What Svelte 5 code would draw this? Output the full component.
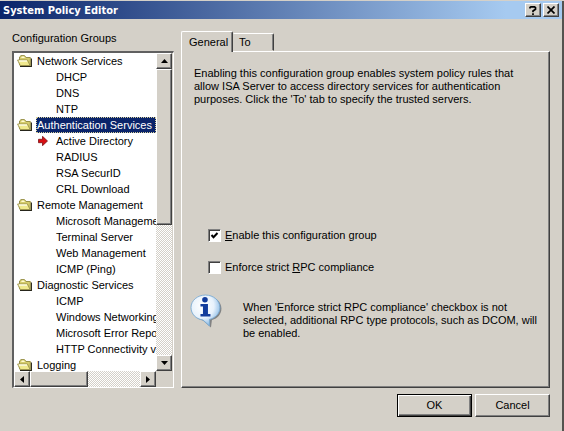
<script>
  const groups = [
    { name: 'Network Services', items: ['DHCP', 'DNS', 'NTP'] },
    { name: 'Authentication Services', items: ['Active Directory', 'RADIUS', 'RSA SecurID', 'CRL Download'] },
    { name: 'Remote Management', items: ['Microsoft Management', 'Terminal Server', 'Web Management', 'ICMP (Ping)'] },
    { name: 'Diagnostic Services', items: ['ICMP', 'Windows Networking', 'Microsoft Error Reporting', 'HTTP Connectivity verifiers'] },
    { name: 'Logging', items: [] }
  ];
  const current = 'Active Directory';
  let selected = $state('Authentication Services');
  let tab = $state('General');
  let enabled = $state(true);
  let strict = $state(false);
</script>

{#snippet folder()}
  <svg class="folder" width="15" height="12" viewBox="0 0 15 12" aria-hidden="true">
    <path d="M3 11.500h11.300V3.500" fill="none" stroke="#26251a" stroke-width="1.300" />
    <path d="M2.500 10V2L4 .6h3.500L9 2.500h4.300V10.500H4z" fill="#d6cd6c" stroke="#98904a" />
    <path d="M4 3l1-1.500h2l1 1.500z" fill="#fffbd0" />
    <path d="M.6 5h9.900l2.500 5.500H3.200z" fill="#f0e98e" stroke="#98904a" stroke-width=".9" />
    <path d="M1.800 6h8.200" stroke="#fffff0" stroke-width="1.300" />
  </svg>
{/snippet}

<div class="window">
  <header>
    <h1>System Policy Editor</h1>
    <button class="cap" aria-label="Help">
      <svg width="8" height="9" viewBox="0 0 8 9"><path d="M1 2.500V1.500L2 .8h3.500l1 .9v1.500L4 5v1.200M4 7.300V9" fill="none" stroke="#000" stroke-width="1.700" /></svg>
    </button>
    <button class="cap close" aria-label="Close">
      <svg width="8" height="8" viewBox="0 0 8 8"><path d="M.5.5l7 7M7.500.5l-7 7" stroke="#000" stroke-width="1.700" /></svg>
    </button>
  </header>

  <main>
    <section class="side">
      <h2 id="groups">Configuration Groups</h2>
      <div class="box">
        <ul class="tree" aria-labelledby="groups">
          {#each groups as g}
            <li>
              <button class="row" onclick={() => (selected = g.name)}>
                {@render folder()}
                <span class="name" class:selected={selected === g.name}>{g.name}</span>
              </button>
              {#if g.items.length}
                <ul>
                  {#each g.items as item}
                    <li>
                      <button class="row child" onclick={() => (selected = item)}>
                        <span class="mark">
                          {#if item === current}
                            <svg width="10" height="10" viewBox="0 0 10 10" aria-hidden="true"><path d="M.5 3.300h4v-3L9.500 5 4.500 9.700v-3h-4z" fill="#d80f12" stroke="#7a1014" stroke-width=".8" /></svg>
                          {/if}
                        </span>
                        <span class="name" class:selected={selected === item}>{item}</span>
                      </button>
                    </li>
                  {/each}
                </ul>
              {/if}
            </li>
          {/each}
        </ul>
        <div class="bar vertical">
          <button class="arrow" aria-label="Scroll up"><svg width="7" height="4" viewBox="0 0 7 4"><path d="M0 4L3.500 0 7 4z" /></svg></button>
          <div class="thumb"></div>
          <button class="arrow end" aria-label="Scroll down"><svg width="7" height="4" viewBox="0 0 7 4"><path d="M0 0h7L3.500 4z" /></svg></button>
        </div>
        <div class="bar horizontal">
          <button class="arrow" aria-label="Scroll left"><svg width="4" height="7" viewBox="0 0 4 7"><path d="M4 0v7L0 3.500z" /></svg></button>
          <div class="thumb"></div>
          <button class="arrow end" aria-label="Scroll right"><svg width="4" height="7" viewBox="0 0 4 7"><path d="M0 0l4 3.500L0 7z" /></svg></button>
        </div>
      </div>
    </section>

    <section class="content">
      <div class="tabs" role="tablist">
        {#each ['General', 'To'] as t}
          <button role="tab" class:active={tab === t} aria-selected={tab === t} onclick={() => (tab = t)}>{t}</button>
        {/each}
      </div>
      <div class="panel" role="tabpanel">
        <p class="intro">Enabling this configuration group enables system policy rules that<br />allow ISA Server to access directory services for authentication<br />purposes. Click the 'To' tab to specify the trusted servers.</p>
        <div class="options">
          <label><input type="checkbox" bind:checked={enabled} /><span><u>E</u>nable this configuration group</span></label>
          <label><input type="checkbox" bind:checked={strict} /><span>Enforce strict <u>R</u>PC compliance</span></label>
        </div>
        <div class="info">
          <svg width="32" height="34" viewBox="0 0 32 34" aria-hidden="true">
            <defs>
              <radialGradient id="bubble" cx=".4" cy=".35" r=".65">
                <stop offset="0" stop-color="#fff" />
                <stop offset=".6" stop-color="#e8f2fc" />
                <stop offset="1" stop-color="#8dbce6" />
              </radialGradient>
            </defs>
            <path d="M17 2.500c8 0 14.500 5 14.500 12 0 6-4 10-9.500 11.500L21 33.500l-8-7C6 25 3 20 3 15z" fill="#66686c" opacity=".75" />
            <path d="M15.500 1C23.500 1 30 6.500 30 13.500c0 6-4.500 10.500-10.500 12V32L13 26C6 25.200 1 20 1 13.500 1 6.500 7.500 1 15.500 1z" fill="url(#bubble)" stroke="#7aaad2" stroke-width=".9" />
            <circle cx="15" cy="5.800" r="2.800" fill="#123c9c" />
            <path d="M10.500 10H18v10h2.500v2.500h-10V20H13v-7.500h-2.500z" fill="#123c9c" />
          </svg>
          <p>When 'Enforce strict RPC compliance' checkbox is not<br />selected, additional RPC type protocols, such as DCOM, will<br />be enabled.</p>
        </div>
      </div>
    </section>
  </main>

  <footer>
    <button class="push default">OK</button>
    <button class="push">Cancel</button>
  </footer>
</div>

<style>
  :global(body) {
    background: #d4d0c8;
  }
  .window {
    box-sizing: border-box;
    min-height: 100vh;
    border-right: 2px solid #55534f;
    background: #d4d0c8;
    color: #000;
    font: 11px/13px Tahoma, "Liberation Sans", sans-serif;
    white-space: nowrap;
  }
  button {
    box-sizing: border-box;
    margin: 0;
    padding: 0;
    border: 0;
    border-radius: 0;
    background: #d4d0c8;
    color: inherit;
    font: inherit;
  }
  h1, h2, p, ul {
    margin: 0;
    padding: 0;
    list-style: none;
    font-size: 11px;
  }
  header {
    display: flex;
    align-items: center;
    height: 18px;
    margin-top: 1px;
    padding: 0 3px;
    background: linear-gradient(90deg, #0a246a, #a6caf0 90%);
    color: #fff;
  }
  h1 {
    flex: 1;
    font-family: Tahoma, "DejaVu Sans Condensed", sans-serif;
    font-weight: bold;
  }
  .cap, .arrow, .thumb, .push {
    border: 1px solid;
    border-color: #fff #404040 #404040 #fff;
    box-shadow: inset -1px -1px #808080;
  }
  .cap {
    display: grid;
    place-items: center;
    width: 16px;
    height: 14px;
    color: #000;
  }
  .close {
    margin-left: 2px;
  }
  main {
    display: flex;
    gap: 7px;
    padding: 12px 12px 0;
  }
  .side {
    flex: none;
    width: 162px;
  }
  h2 {
    padding: 1px 0 6px;
    font-weight: normal;
  }
  .box {
    display: grid;
    grid-template-columns: 1fr 16px;
    grid-template-rows: 318px 16px;
    border: 2px solid;
    border-color: #606060 #fff #fff #606060;
    border-right-width: 1px;
    border-bottom-width: 1px;
    padding-right: 1px;
  }
  .tree {
    overflow: hidden;
    background: #fff;
  }
  .row {
    display: flex;
    align-items: center;
    width: 100%;
    height: 16px;
    padding-left: 3px;
    gap: 4px;
    background: none;
    text-align: left;
  }
  .folder {
    flex: none;
  }
  .child {
    padding-left: 24px;
    gap: 7px;
  }
  .mark {
    display: flex;
    width: 10px;
    flex: none;
  }
  .name {
    padding: 1px;
    line-height: 14px;
  }
  .selected {
    flex: 1;
    background: #0a246a;
    color: #fff;
    outline: 1px dotted #d8cf9a;
    outline-offset: -1px;
  }
  .bar {
    display: flex;
    background: repeating-conic-gradient(#fff 0 25%, #d4d0c8 0 50%) 0 0 / 2px 2px;
  }
  .vertical {
    flex-direction: column;
  }
  .arrow {
    display: grid;
    place-items: center;
    width: 16px;
    height: 16px;
    flex: none;
  }
  .thumb {
    box-sizing: border-box;
    background: #d4d0c8;
  }
  .vertical .thumb {
    height: 49%;
  }
  .horizontal .thumb {
    width: 41%;
  }
  .end {
    margin-top: auto;
  }
  .horizontal .end {
    margin: 0 0 0 auto;
  }
  .content {
    display: flex;
    flex: 1;
    flex-direction: column;
    min-width: 0;
  }
  .tabs {
    display: flex;
    align-items: flex-end;
    height: 20px;
  }
  .tabs button {
    position: relative;
    width: 41px;
    height: 18px;
    padding-left: 5px;
    border: 1px solid;
    border-color: #fff #404040 transparent transparent;
    border-top-right-radius: 2px;
    box-shadow: inset -1px 0 #808080;
    text-align: left;
  }
  .tabs .active {
    width: 52px;
    height: 21px;
    margin-bottom: -1px;
    padding-left: 7px;
    border-left-color: #fff;
    border-bottom: 0;
    border-radius: 2px 2px 0 0;
    z-index: 1;
  }
  .panel {
    flex: 1;
    padding: 15px 12px 0;
    border: 1px solid;
    border-color: #fff #404040 #404040 #fff;
    box-shadow: inset -1px -1px #808080;
  }
  .options {
    display: grid;
    gap: 19px;
    margin: 123px 0 20px 14px;
  }
  label {
    display: flex;
    align-items: center;
    gap: 4px;
  }
  input {
    appearance: none;
    width: 13px;
    height: 13px;
    margin: 0;
    border: 1px solid;
    border-color: #808080 #fff #fff #808080;
    background: #fff;
    box-shadow: inset 1px 1px #404040;
  }
  input:checked {
    background: #fff url("data:image/svg+xml,%3Csvg xmlns='http://www.w3.org/2000/svg' viewBox='0 0 11 11'%3E%3Cpath d='M2.500 5l2 2.200 4-4.200' fill='none' stroke='%23000' stroke-width='2'/%3E%3C/svg%3E");
  }
  .info {
    display: flex;
    gap: 21px;
    margin-left: -4px;
  }
  .info p {
    padding-top: 7px;
  }
  footer {
    display: flex;
    justify-content: flex-end;
    gap: 3px;
    padding: 6px 12px 12px;
  }
  .push {
    width: 75px;
    height: 23px;
  }
  .default {
    border-color: #000;
    box-shadow: inset 1px 1px #fff, inset -1px -1px #404040, inset -2px -2px #808080;
  }
</style>
